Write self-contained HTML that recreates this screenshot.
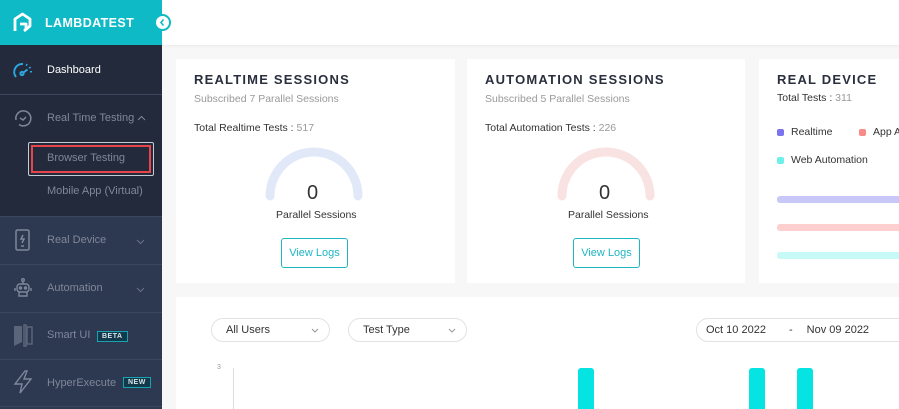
<!DOCTYPE html>
<html><head><style>
*{margin:0;padding:0;box-sizing:border-box}
html,body{width:899px;height:409px;overflow:hidden}
body{background:#f7f7f7;font-family:"Liberation Sans",sans-serif}
#w{position:relative;width:899px;height:409px;overflow:hidden}
.abs{position:absolute;white-space:nowrap}
.sb{left:0;top:0;width:162px;height:409px;background:#2d3851}
.logo{left:0;top:0;width:162px;height:45px;background:#0ebac5;color:#fff;font-weight:bold;font-size:12.5px}
.dark{left:0;top:45px;width:162px;height:171px;background:#232a3b}
.nav{color:#7f8799;font-size:11px}
.div{left:0;width:162px;height:1px;background:#3c465c}
.card{background:#fff}
h3{font-size:13px;letter-spacing:1.2px;color:#2a2f3d;font-weight:bold}
.sub{font-size:10.5px;color:#999}
.t{font-size:10.5px;color:#333}
.btn{border:1px solid #1fb6c1;border-radius:3px;color:#1fb6c1;font-size:11px;text-align:center;line-height:28px;width:67px;height:30px}
.pill{border:1px solid #e2e2e2;border-radius:13px;height:24px;font-size:11px;color:#333;line-height:22px;padding-left:14px}
.bar{background:#06e3e3;border-radius:3px 3px 0 0;width:16px;top:368px;height:41px}
.badge{border:1px solid #19a3b0;background:#123a4b;color:#d9e3ea;font-size:7px;font-weight:bold;padding:1px 4px;letter-spacing:.5px}
.chev{position:absolute}
</style></head><body><div id="w">
<div class="abs" style="left:162px;top:0;width:737px;height:45px;background:#fff;box-shadow:0 1px 4px rgba(0,0,0,.06)"></div>
<div class="abs sb"></div>
<div class="abs dark"></div>
<div class="abs logo">
<svg class="abs" style="left:11px;top:11px" width="23" height="24" viewBox="0 0 23 24" fill="none" stroke="#fff" stroke-width="2.8" stroke-linejoin="round"><path d="M4 20V8l7.5-5 7.5 5v7l-6 5"/><path d="M9 13h6v5"/></svg>
<span class="abs" style="left:45px;top:16px;letter-spacing:.4px">LAMBDATEST</span>
</div>
<div class="abs" style="left:154px;top:14px;width:17px;height:17px;border-radius:50%;background:#fff;border:2px solid #0ebac5"><svg width="13" height="13" viewBox="0 0 13 13"><path d="M7.5 3.5L5 6.5l2.5 3" stroke="#0ebac5" stroke-width="1.6" fill="none"/></svg></div>
<svg class="abs" style="left:12px;top:61px" width="22" height="18" viewBox="0 0 22 18" fill="none" stroke="#2aa8df" stroke-width="2"><path d="M4 16A8 8 0 0 1 11 3"/><path d="M14 3.5l1.5.8M17.5 6l.8 1.5M19 10v1.5" stroke-dasharray="1.5 2"/><circle cx="10" cy="12.5" r="1.6"/><path d="M11.5 11.5l4-3"/></svg>
<div class="abs" style="left:47px;top:64px;color:#fff;font-size:11px">Dashboard</div>
<div class="abs div" style="top:94px"></div>
<svg class="abs" style="left:13px;top:108px" width="20" height="20" viewBox="0 0 20 20" fill="none" stroke="#7f8799" stroke-width="1.5"><path d="M3 12A7.5 7.5 0 1 1 6 16.5"/><path d="M7 10l3 2 3-3"/></svg>
<div class="abs nav" style="left:47px;top:112px">Real Time Testing</div>
<svg class="chev" style="left:137px;top:115px" width="9" height="6"><path d="M1 5l3.5-3.5L8 5" stroke="#7f8799" fill="none"/></svg>
<div class="abs" style="left:28px;top:142px;width:126px;height:34px;border:1px solid #c6cad1;border-radius:2px"></div>
<div class="abs" style="left:31px;top:145px;width:120px;height:28px;border:2px solid #e8454a"></div>
<div class="abs nav" style="left:47px;top:152px">Browser Testing</div>
<div class="abs nav" style="left:47px;top:185px">Mobile App (Virtual)</div>
<div class="abs div" style="top:216px"></div>
<svg class="abs" style="left:14px;top:229px" width="18" height="22" viewBox="0 0 18 22" fill="none" stroke="#7f8799" stroke-width="1.5"><rect x="2" y="1" width="13" height="20" rx="1.5"/><path d="M9 6l-2 4h3l-2 4"/><path d="M7 17h3"/></svg>
<div class="abs nav" style="left:47px;top:234px">Real Device</div>
<svg class="chev" style="left:136px;top:239px" width="9" height="6"><path d="M1 1l3.5 3.5L8 1" stroke="#6a7388" fill="none"/></svg>
<div class="abs div" style="top:264px"></div>
<svg class="abs" style="left:12px;top:277px" width="22" height="22" viewBox="0 0 22 22" fill="none" stroke="#7f8799" stroke-width="1.4"><circle cx="11" cy="3" r="1.3"/><path d="M11 4.5v2"/><rect x="5" y="7" width="12" height="8" rx="3"/><circle cx="8.5" cy="11" r="1"/><circle cx="13.5" cy="11" r="1"/><path d="M3 11v3M19 11v3M7 15v4h8v-4"/></svg>
<div class="abs nav" style="left:47px;top:282px">Automation</div>
<svg class="chev" style="left:136px;top:287px" width="9" height="6"><path d="M1 1l3.5 3.5L8 1" stroke="#6a7388" fill="none"/></svg>
<div class="abs div" style="top:312px"></div>
<svg class="abs" style="left:13px;top:323px" width="20" height="25" viewBox="0 0 20 25" fill="#5b6579"><path d="M1 3h8v16l-8 4z"/><path d="M11 2h2v21h-2zM14 4h5v17h-5z" fill="none" stroke="#5b6579" stroke-width="1.5"/></svg>
<div class="abs nav" style="left:47px;top:329px">Smart UI</div>
<div class="abs badge" style="left:97px;top:331px">BETA</div>
<div class="abs div" style="top:359px"></div>
<svg class="abs" style="left:12px;top:370px" width="22" height="24" viewBox="0 0 22 24" fill="none" stroke="#7f8799" stroke-width="1.4"><path d="M13 1L3 14h7l-2 9 11-14h-7l3-8z"/></svg>
<div class="abs nav" style="left:47px;top:377px">HyperExecute</div>
<div class="abs badge" style="left:123px;top:377px">NEW</div>
<div class="abs div" style="top:406px"></div>

<div class="abs card" style="left:176px;top:59px;width:279px;height:224px"></div>
<h3 class="abs" style="left:194px;top:72px">REALTIME SESSIONS</h3>
<div class="abs sub" style="left:194px;top:93px">Subscribed 7 Parallel Sessions</div>
<div class="abs t" style="left:194px;top:122px">Total Realtime Tests : <span style="color:#999">517</span></div>
<svg class="abs" style="left:262px;top:143px" width="104" height="58"><path d="M8 53A44 44 0 0 1 96 53" stroke="#e1e9f8" stroke-width="9" fill="none" stroke-linecap="round"/></svg>
<div class="abs" style="left:307px;top:182px;font-size:20px;color:#333">0</div>
<div class="abs t" style="left:276px;top:209px">Parallel Sessions</div>
<div class="abs btn" style="left:281px;top:238px">View Logs</div>

<div class="abs card" style="left:467px;top:59px;width:278px;height:224px"></div>
<h3 class="abs" style="left:485px;top:72px">AUTOMATION SESSIONS</h3>
<div class="abs sub" style="left:485px;top:93px">Subscribed 5 Parallel Sessions</div>
<div class="abs t" style="left:485px;top:122px">Total Automation Tests : <span style="color:#999">226</span></div>
<svg class="abs" style="left:554px;top:143px" width="104" height="58"><path d="M8 53A44 44 0 0 1 96 53" stroke="#f9e2e2" stroke-width="9" fill="none" stroke-linecap="round"/></svg>
<div class="abs" style="left:599px;top:182px;font-size:20px;color:#333">0</div>
<div class="abs t" style="left:568px;top:209px">Parallel Sessions</div>
<div class="abs btn" style="left:573px;top:238px">View Logs</div>

<div class="abs card" style="left:759px;top:59px;width:140px;height:224px"></div>
<h3 class="abs" style="left:777px;top:72px">REAL DEVICE</h3>
<div class="abs t" style="left:777px;top:92px">Total Tests : <span style="color:#999">311</span></div>
<div class="abs" style="left:777px;top:129px;width:7px;height:7px;border-radius:2px;background:#7b73f0"></div>
<div class="abs t" style="left:791px;top:126px">Realtime</div>
<div class="abs" style="left:859px;top:129px;width:7px;height:7px;border-radius:2px;background:#f88a88"></div>
<div class="abs t" style="left:873px;top:126px;width:26px;overflow:hidden">App Automation</div>
<div class="abs" style="left:777px;top:157px;width:7px;height:7px;border-radius:2px;background:#6fefe9"></div>
<div class="abs t" style="left:791px;top:154px">Web Automation</div>
<div class="abs" style="left:777px;top:196px;width:122px;height:7px;border-radius:3px 0 0 3px;background:#c9c6f8"></div>
<div class="abs" style="left:777px;top:224px;width:122px;height:7px;border-radius:3px 0 0 3px;background:#fdd0cf"></div>
<div class="abs" style="left:777px;top:252px;width:122px;height:7px;border-radius:3px 0 0 3px;background:#c7f9f6"></div>

<div class="abs card" style="left:176px;top:297px;width:723px;height:112px"></div>
<div class="abs pill" style="left:211px;top:318px;width:119px">All Users<svg class="chev" style="right:10px;top:9px" width="8" height="5"><path d="M1 1l3 3 3-3" stroke="#999" fill="none"/></svg></div>
<div class="abs pill" style="left:348px;top:318px;width:119px">Test Type<svg class="chev" style="right:10px;top:9px" width="8" height="5"><path d="M1 1l3 3 3-3" stroke="#999" fill="none"/></svg></div>
<div class="abs pill" style="left:696px;top:318px;width:203px;padding-left:9px;border-radius:13px 0 0 13px;border-right:none">Oct 10 2022 <span style="margin-left:20px">-</span><span style="margin-left:14px">Nov 09 2022</span></div>
<div class="abs" style="left:217px;top:364px;font-size:7px;color:#999">3</div>
<div class="abs" style="left:233px;top:368px;width:1px;height:41px;background:#ddd"></div>
<div class="abs bar" style="left:578px"></div>
<div class="abs bar" style="left:749px"></div>
<div class="abs bar" style="left:797px"></div>
</div></body></html>
